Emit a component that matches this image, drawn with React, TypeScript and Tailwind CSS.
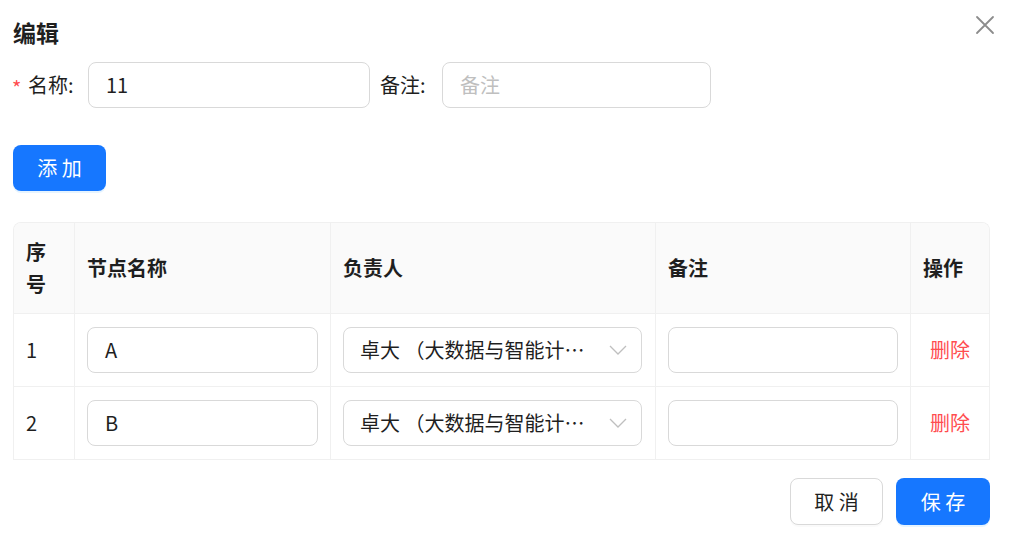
const ROWS = [
  { id: 1, name: "A", owner: "卓大 （大数据与智能计算研究中心）" },
  { id: 2, name: "B", owner: "卓大 （大数据与智能计算研究中心）" },
];

const FONT = "font-['Noto_Sans_CJK_SC','Noto_Sans',sans-serif]";

function TextInput({ value, placeholder, className }: { value?: string; placeholder?: string; className: string }) {
  return (
    <div
      className={`h-[46px] flex items-center rounded-[8px] border border-[#d9d9d9] bg-white pl-[17px] pr-3 text-[20px] ${className}`}
    >
      {value ? (
        <span className="text-[#1f1f1f]">{value}</span>
      ) : (
        <span className="text-[#bfbfbf]">{placeholder}</span>
      )}
    </div>
  );
}

export default function App() {
  return (
    <div className={`relative w-[1017px] h-[543px] bg-white ${FONT} text-[#1f1f1f]`}>
      <button className="absolute left-[974px] top-[14px] w-[22px] h-[22px] flex items-center justify-center">
        <svg width="20" height="20" viewBox="0 0 20 20" fill="none">
          <path d="M2 2L18 18M18 2L2 18" stroke="#8c8c8c" strokeWidth="1.8" strokeLinecap="round" />
        </svg>
      </button>

      <div className="pl-[13px] pr-[27px] pt-[15px]">
        <h1 className="text-[23px] leading-[34px] font-bold">编辑</h1>

        <div className="mt-[13px] flex items-center h-[46px]">
          <span className="text-[#ff4d4f] text-[20px] leading-none mt-[6px] w-[16px] -ml-[1px]">*</span>
          <span className="text-[20px] w-[60px]">名称:</span>
          <TextInput value="11" className="w-[282px]" />
          <span className="text-[20px] ml-[10px] w-[62px]">备注:</span>
          <TextInput placeholder="备注" className="w-[269px]" />
        </div>

        <button className="mt-[37px] h-[46px] w-[93px] rounded-[8px] bg-[#1677ff] text-white text-[20px] shadow-[0_2px_0_rgba(5,145,255,0.1)]">
          添 加
        </button>

        <div className="mt-[31px] rounded-t-[8px] overflow-hidden border-l border-r border-t border-[#f0f0f0]">
          <div className="flex bg-[#fafafa] border-b border-[#f0f0f0] text-[20px] font-bold">
            <div className="w-[61px] px-[12px] py-[13px] leading-[32px] border-r border-[#f0f0f0]">
              序<br />号
            </div>
            <div className="w-[256px] px-[12px] flex items-center border-r border-[#f0f0f0]">节点名称</div>
            <div className="w-[325px] px-[12px] flex items-center border-r border-[#f0f0f0]">负责人</div>
            <div className="w-[255px] px-[12px] flex items-center border-r border-[#f0f0f0]">备注</div>
            <div className="flex-1 px-[12px] flex items-center">操作</div>
          </div>
          {ROWS.map((r) => (
            <div key={r.id} className="flex border-b border-[#f0f0f0] text-[20px]">
              <div className="w-[61px] px-[12px] flex items-center border-r border-[#f0f0f0]">{r.id}</div>
              <div className="w-[256px] px-[12px] py-[13px] border-r border-[#f0f0f0]">
                <TextInput value={r.name} className="w-[231px]" />
              </div>
              <div className="w-[325px] px-[12px] py-[13px] border-r border-[#f0f0f0]">
                <div className="h-[46px] w-[299px] flex items-center rounded-[8px] border border-[#d9d9d9] pl-[16px] pr-[14px]">
                  <span className="flex-1 min-w-0 truncate">{r.owner}</span>
                  <svg className="ml-[16px] shrink-0" width="18" height="10" viewBox="0 0 18 10" fill="none">
                    <path d="M1 1L9 9L17 1" stroke="#bfbfbf" strokeWidth="1.3" />
                  </svg>
                </div>
              </div>
              <div className="w-[255px] px-[12px] py-[13px] border-r border-[#f0f0f0]">
                <TextInput className="w-[230px]" />
              </div>
              <div className="flex-1 flex items-center justify-center text-[#ff4d4f]">删除</div>
            </div>
          ))}
        </div>

        <div className="mt-[18px] flex justify-end gap-[13px]">
          <button className="h-[47px] w-[93px] rounded-[8px] border border-[#d9d9d9] bg-white text-[20px] text-[#1f1f1f] shadow-[0_2px_0_rgba(0,0,0,0.02)]">
            取 消
          </button>
          <button className="h-[47px] w-[94px] rounded-[8px] bg-[#1677ff] text-white text-[20px] shadow-[0_2px_0_rgba(5,145,255,0.1)]">
            保 存
          </button>
        </div>
      </div>
    </div>
  );
}
